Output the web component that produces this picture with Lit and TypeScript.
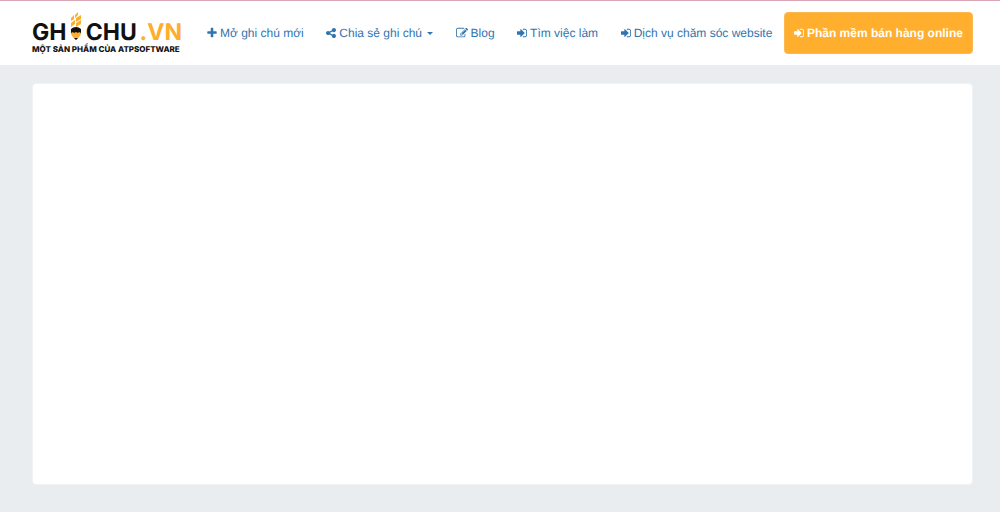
import { LitElement, html, css, svg } from "lit";
import { customElement } from "lit/decorators.js";

const icons = {
  plus: { box: "192 0 1408 1792", width: 10, d: "M1600 736v192q0 40-28 68t-68 28h-416v416q0 40-28 68t-68 28h-192q-40 0-68-28t-28-68v-416h-416q-40 0-68-28t-28-68v-192q0-40 28-68t68-28h416v-416q0-40 28-68t68-28h192q40 0 68 28t28 68v416h416q40 0 68 28t28 68z" },
  share: { box: "128 0 1536 1792", width: 10, d: "M1344 1024q133 0 226.5 93.5t93.5 226.5-93.5 226.5-226.5 93.5-226.5-93.5-93.5-226.5q0-12 2-34l-360-180q-92 86-218 86-133 0-226.5-93.5t-93.5-226.5 93.5-226.5 226.5-93.5q126 0 218 86l360-180q-2-22-2-34 0-133 93.5-226.5t226.5-93.5 226.5 93.5 93.5 226.5-93.5 226.5-226.5 93.5q-126 0-218-86l-360 180q2 22 2 34t-2 34l360 180q92-86 218-86z" },
  edit: { box: "0 0 1792 1792", width: 12, d: "M888 1184l116-116-152-152-116 116v56h96v96h56zm440-720q-16-16-33 1l-350 350q-17 17-1 33t33-1l350-350q17-17 1-33zm80 594v190q0 119-84.5 203.5t-203.5 84.5h-832q-119 0-203.5-84.5t-84.5-203.5v-832q0-119 84.5-203.5t203.5-84.5h832q63 0 117 25 15 7 18 23 3 17-9 29l-49 49q-14 14-32 8-23-6-45-6h-832q-66 0-113 47t-47 113v832q0 66 47 113t113 47h832q66 0 113-47t47-113v-126q0-13 9-22l64-64q15-15 35-7t20 29zm-96-738l288 288-672 672h-288v-288zm444 132l-92 92-288-288 92-92q28-28 68-28t68 28l152 152q28 28 28 68t-28 68z" },
  enter: { box: "128 0 1536 1792", width: 10, d: "M1312 896q0 26-19 45l-544 544q-19 19-45 19t-45-19-19-45v-288h-448q-26 0-45-19t-19-45v-384q0-26 19-45t45-19h448v-288q0-26 19-45t45-19 45 19l544 544q19 19 19 45zm352-352v704q0 119-84.5 203.5t-203.5 84.5h-320q-13 0-22.5-9.5t-9.5-22.5q0-4-1-20t-.5-26.5 3-23.5 10-19.5 20.5-6.5h320q66 0 113-47t47-113v-704q0-66-47-113t-113-47h-312l-11.5-1-11.5-3-8-5.5-7-9-2-13.5q0-4-1-20t-.5-26.5 3-23.5 10-19.5 20.5-6.5h320q119 0 203.5 84.5t84.5 203.5z" },
};

const icon = (name: keyof typeof icons) => {
  const { box, width, d } = icons[name];
  return html`<svg class="icon" width=${width} height="12" viewBox=${box} aria-hidden="true">${svg`<path d=${d} />`}</svg>`;
};

@customElement("app-root")
export class AppRoot extends LitElement {
  static styles = css`
    :host {
      display: flex;
      flex-direction: column;
      box-sizing: border-box;
      min-height: 100vh;
      background: #e9edf0;
      font-family: "Liberation Sans", Arial, sans-serif;
      font-size: 12px;
      line-height: 16px;
      text-rendering: geometricPrecision;
    }
    header {
      display: flex;
      align-items: center;
      box-sizing: border-box;
      min-height: 65px;
      padding: 0 27px 0 32px;
      background: #fff;
      border-top: 1px solid #d9a5b5;
    }
    .logo {
      display: flex;
      flex-direction: column;
      flex: none;
      width: 150px;
      color: #111;
      text-decoration: none;
      white-space: nowrap;
      font-family: Inter, "Liberation Sans", sans-serif;
    }
    .name {
      display: flex;
      align-items: flex-end;
      justify-content: space-between;
      font-size: 23px;
      font-weight: 700;
      line-height: 24px;
    }
    .pencil {
      display: block;
      margin-bottom: 3px;
    }
    .domain {
      color: #fdae2c;
    }
    .tagline {
      font-size: 8px;
      font-weight: 800;
      line-height: 10px;
    }
    nav {
      display: flex;
      flex: 1;
      align-items: center;
      justify-content: space-between;
      margin-left: 14px;
    }
    .link {
      display: flex;
      align-items: center;
      gap: 3px;
      padding: 12px 11px;
      border: 0;
      background: none;
      color: #3175b0;
      font: inherit;
      text-rendering: inherit;
      text-decoration: none;
      white-space: nowrap;
      cursor: pointer;
    }
    .icon {
      flex: none;
      fill: currentColor;
    }
    .caret {
      margin-left: 2px;
      border: 3px solid transparent;
      border-top-color: currentColor;
      border-bottom: 0;
    }
    .cta {
      padding: 12px 9px;
      border: 1px solid #fcb951;
      border-radius: 4px;
      background: #ffae2d;
      color: #fff;
      font-weight: 700;
    }
    main {
      display: flex;
      flex: 1;
      padding: 18px 27px 27px 32px;
    }
    .note {
      flex: 1;
      box-sizing: border-box;
      padding: 16px;
      border: 1px solid #f0f2f4;
      border-radius: 4px;
      outline: 0;
      resize: none;
      background: #fff;
      font: inherit;
    }
  `;

  render() {
    return html`
      <header>
        <a class="logo" href="#">
          <span class="name">
            <span>GH</span>
            <svg class="pencil" width="14" height="29" viewBox="0 0 14 29" aria-hidden="true">
              <g fill="#fdae2c">
                <path d="M6 3 9 0v3L6 6zM2 6l3-3v4L2 9zM7 6l5-3v4L7 10zM2 11l4-3v4l-4 3zM7 11l5-3v4l-5 3z" />
                <path d="M2 18h10v4q-1 3-5 6-4-3-5-6z" />
              </g>
              <path d="M2 17q2-2 5-2t5 2v4l-2-1-1 1-2-1-2 1-1-1-2 1zM5 26h4l-2 2z" fill="#111" />
            </svg>
            <span>CHU</span>
            <span class="domain">.VN</span>
          </span>
          <span class="tagline">MỘT SẢN PHẨM CỦA ATPSOFTWARE</span>
        </a>
        <nav>
          <a class="link" href="#">${icon("plus")}<span>Mở ghi chú mới</span></a>
          <button class="link" type="button" aria-haspopup="true">${icon("share")}<span>Chia sẻ ghi chú</span><span class="caret"></span></button>
          <a class="link" href="#">${icon("edit")}<span>Blog</span></a>
          <a class="link" href="#">${icon("enter")}<span>Tìm việc làm</span></a>
          <a class="link" href="#">${icon("enter")}<span>Dịch vụ chăm sóc website</span></a>
          <a class="link cta" href="#">${icon("enter")}<span>Phần mềm bán hàng online</span></a>
        </nav>
      </header>
      <main>
        <textarea class="note" aria-label="Ghi chú"></textarea>
      </main>
    `;
  }
}
